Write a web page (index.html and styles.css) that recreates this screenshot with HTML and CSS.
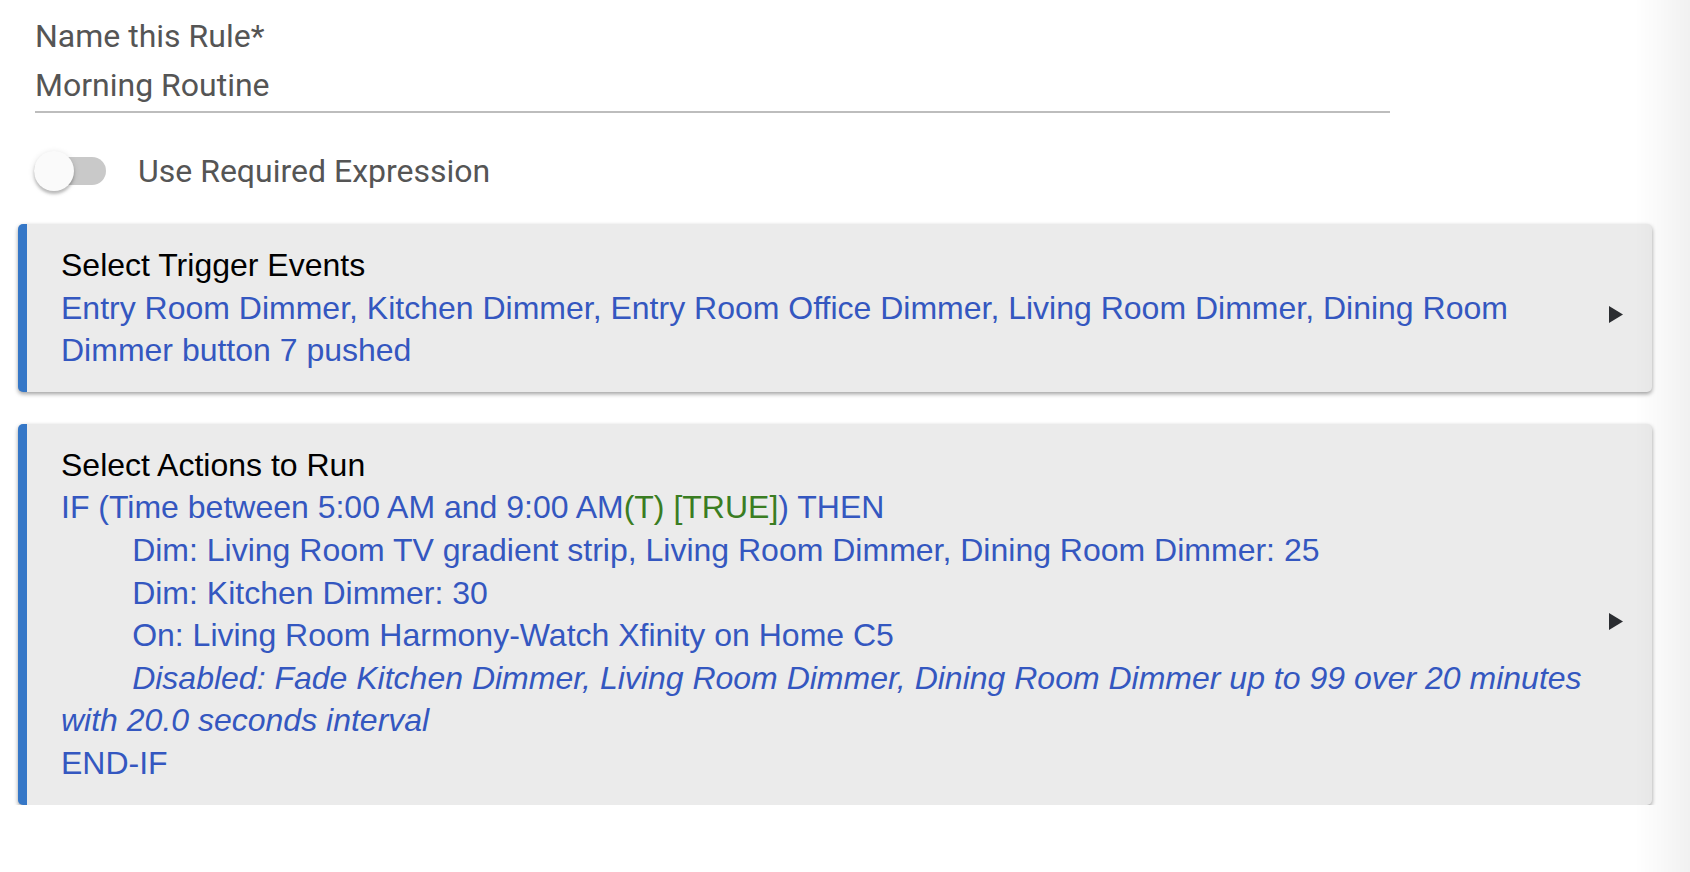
FILE: index.html
```html
<!DOCTYPE html>
<html>
<head>
<meta charset="utf-8">
<link rel="stylesheet" href="styles.css">
</head>
<body>
<div class="page">
  <div class="field">
    <div class="field-label">Name this Rule*</div>
    <div class="field-value">Morning Routine</div>
  </div>

  <div class="switch-row">
    <div class="switch">
      <div class="switch-track"></div>
      <div class="switch-thumb"></div>
    </div>
    <div class="switch-label">Use Required Expression</div>
  </div>

  <div class="cards">
    <div class="card">
      <div class="card-body">
        <div class="card-title">Select Trigger Events</div>
        <div class="card-text">Entry Room Dimmer, Kitchen Dimmer, Entry Room Office Dimmer, Living Room Dimmer, Dining Room Dimmer button 7 pushed</div>
      </div>
      <svg class="card-arrow" viewBox="0 0 14 17" width="14" height="17"><polygon points="0,0 14,8.5 0,17" fill="#2b2d31"/></svg>
    </div>

    <div class="card">
      <div class="card-body">
        <div class="card-title">Select Actions to Run</div>
        <div class="card-text">IF (Time between 5:00 AM and 9:00 AM<span class="ok">(T) [TRUE]</span>) THEN<br>&nbsp;&nbsp;&nbsp;&nbsp;&nbsp;&nbsp;&nbsp;&nbsp;Dim: Living Room TV gradient strip, Living Room Dimmer, Dining Room Dimmer: 25<br>&nbsp;&nbsp;&nbsp;&nbsp;&nbsp;&nbsp;&nbsp;&nbsp;Dim: Kitchen Dimmer: 30<br>&nbsp;&nbsp;&nbsp;&nbsp;&nbsp;&nbsp;&nbsp;&nbsp;On: Living Room Harmony-Watch Xfinity on Home C5<br><span class="disabled">&nbsp;&nbsp;&nbsp;&nbsp;&nbsp;&nbsp;&nbsp;&nbsp;Disabled: Fade Kitchen Dimmer, Living Room Dimmer, Dining Room Dimmer up to 99 over 20 minutes with 20.0 seconds interval</span><br>END-IF</div>
      </div>
      <svg class="card-arrow" viewBox="0 0 14 17" width="14" height="17"><polygon points="0,0 14,8.5 0,17" fill="#2b2d31"/></svg>
    </div>
  </div>
</div>
<div class="edge-shade"></div>
</body>
</html>
```

FILE: styles.css
```css
html, body {
  margin: 0;
  padding: 0;
  background: #ffffff;
}

.page {
  padding-top: 16px;
}

.field {
  margin-left: 35px;
  width: 1355px;
  font-family: Roboto, "Noto Sans", sans-serif;
  font-size: 32px;
  line-height: 40px;
  color: #555555;
}

.field-label {
  margin-bottom: 9px;
}

.field-value {
  padding-bottom: 6px;
  border-bottom: 2px solid #bdbdbd;
}

.switch-row {
  display: flex;
  align-items: center;
  margin-top: 38px;
  margin-left: 34px;
  height: 40px;
}

.switch {
  position: relative;
  width: 72px;
  height: 40px;
  flex: none;
}

.switch-track {
  position: absolute;
  left: 0;
  top: 6px;
  width: 72px;
  height: 28px;
  border-radius: 14px;
  background: #c9c9c9;
}

.switch-thumb {
  position: absolute;
  left: 0;
  top: 0;
  width: 40px;
  height: 40px;
  border-radius: 50%;
  background: #fafafa;
  box-shadow: 0 3px 3px rgba(0, 0, 0, 0.22), 0 1px 6px rgba(0, 0, 0, 0.12);
}

.switch-label {
  margin-left: 32px;
  font-family: Roboto, "Noto Sans", sans-serif;
  font-size: 32px;
  line-height: 40px;
  color: #555555;
}

.cards {
  margin-top: 33px;
  margin-left: 18px;
  width: 1634px;
  display: flex;
  flex-direction: column;
  gap: 32px;
}

.card {
  display: flex;
  align-items: center;
  background: #ebebeb;
  border-left: 9px solid #3577c7;
  border-radius: 5px;
  box-shadow: 0 2px 4px rgba(0, 0, 0, 0.38);
  padding: 20px 29px 20px 34px;
  font-family: "Liberation Sans", Arial, sans-serif;
  font-size: 32px;
  line-height: 42.6px;
}

.card-body {
  flex: 1;
  min-width: 0;
}

.card-title {
  color: #000000;
}

.card-text {
  color: #3457c0;
}

.ok {
  color: #3a7d22;
}

.disabled {
  font-style: italic;
}

.card-arrow {
  flex: none;
  margin-left: 10px;
  margin-top: 14px;
}

.edge-shade {
  position: fixed;
  top: 0;
  right: 0;
  width: 55px;
  height: 100%;
  background: linear-gradient(to right, rgba(0, 0, 0, 0), rgba(0, 0, 0, 0.055));
  pointer-events: none;
}
```
